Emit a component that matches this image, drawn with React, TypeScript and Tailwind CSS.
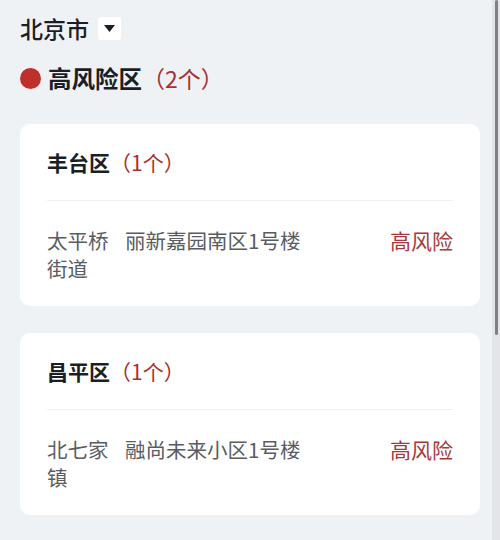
import React from 'react';

type Place = {
  district: string;
  count: number;
  street: string;
  community: string;
  level: string;
};

const places: Place[] = [
  { district: '丰台区', count: 1, street: '太平桥街道', community: '丽新嘉园南区1号楼', level: '高风险' },
  { district: '昌平区', count: 1, street: '北七家镇', community: '融尚未来小区1号楼', level: '高风险' },
];

const font = { fontFamily: '"Noto Sans CJK SC", "Noto Sans", sans-serif' };

const DistrictCard: React.FC<{ place: Place }> = ({ place }) => (
  <div className="bg-white rounded-[10px] px-[27px]">
    <div className="pt-[23px] pb-[23px] text-[21px] leading-[30px] flex">
      <span className="font-bold text-[#1b1e25]">{place.district}</span>
      <span className="text-[#a8312e]">（{place.count}个）</span>
    </div>
    <div className="h-px bg-[#eef0f2]" />
    <div className="flex items-start pt-[25px] pb-[24px] text-[20.5px] leading-[28px]">
      <div className="w-[64px] text-[#595c63] shrink-0">{place.street}</div>
      <div className="ml-[14px] flex-1 text-[#595c63]">{place.community}</div>
      <div className="text-[#a63a3b] text-[21px]">{place.level}</div>
    </div>
  </div>
);

export default function App() {
  return (
    <div className="w-[500px] h-[540px] bg-[#eff2f5] relative overflow-hidden" style={font}>
      <div className="pl-[20px] pr-[20px]">
        <div className="flex items-center gap-[9px] pt-[13px]">
          <span className="text-[23px] leading-[30px] font-medium text-[#1b1e25]">北京市</span>
          <div className="w-[23px] h-[23px] bg-white rounded-[3px] flex items-center justify-center">
            <svg width="11" height="7" viewBox="0 0 11 7">
              <path d="M0 0 L11 0 L5.5 7 Z" fill="#1b1e25" />
            </svg>
          </div>
        </div>
        <div className="flex items-center mt-[19px]">
          <span className="w-[21px] h-[21px] rounded-full bg-[#c0302b] shrink-0" />
          <span className="ml-[7px] text-[23.5px] leading-[32px] font-bold text-[#1b1e25]">高风险区</span>
          <span className="text-[23px] leading-[32px] text-[#a8312e]">（2个）</span>
        </div>
        <div className="flex flex-col gap-[27px] mt-[30px]">
          {places.map((p) => (
            <DistrictCard key={p.district} place={p} />
          ))}
        </div>
      </div>
      <div className="absolute top-0 right-0 w-[8px] h-full bg-[#e3e5e8]">
        <div className="mx-auto mt-0 w-[3px] h-[335px] bg-[#7d8085] rounded-full" />
      </div>
    </div>
  );
}
